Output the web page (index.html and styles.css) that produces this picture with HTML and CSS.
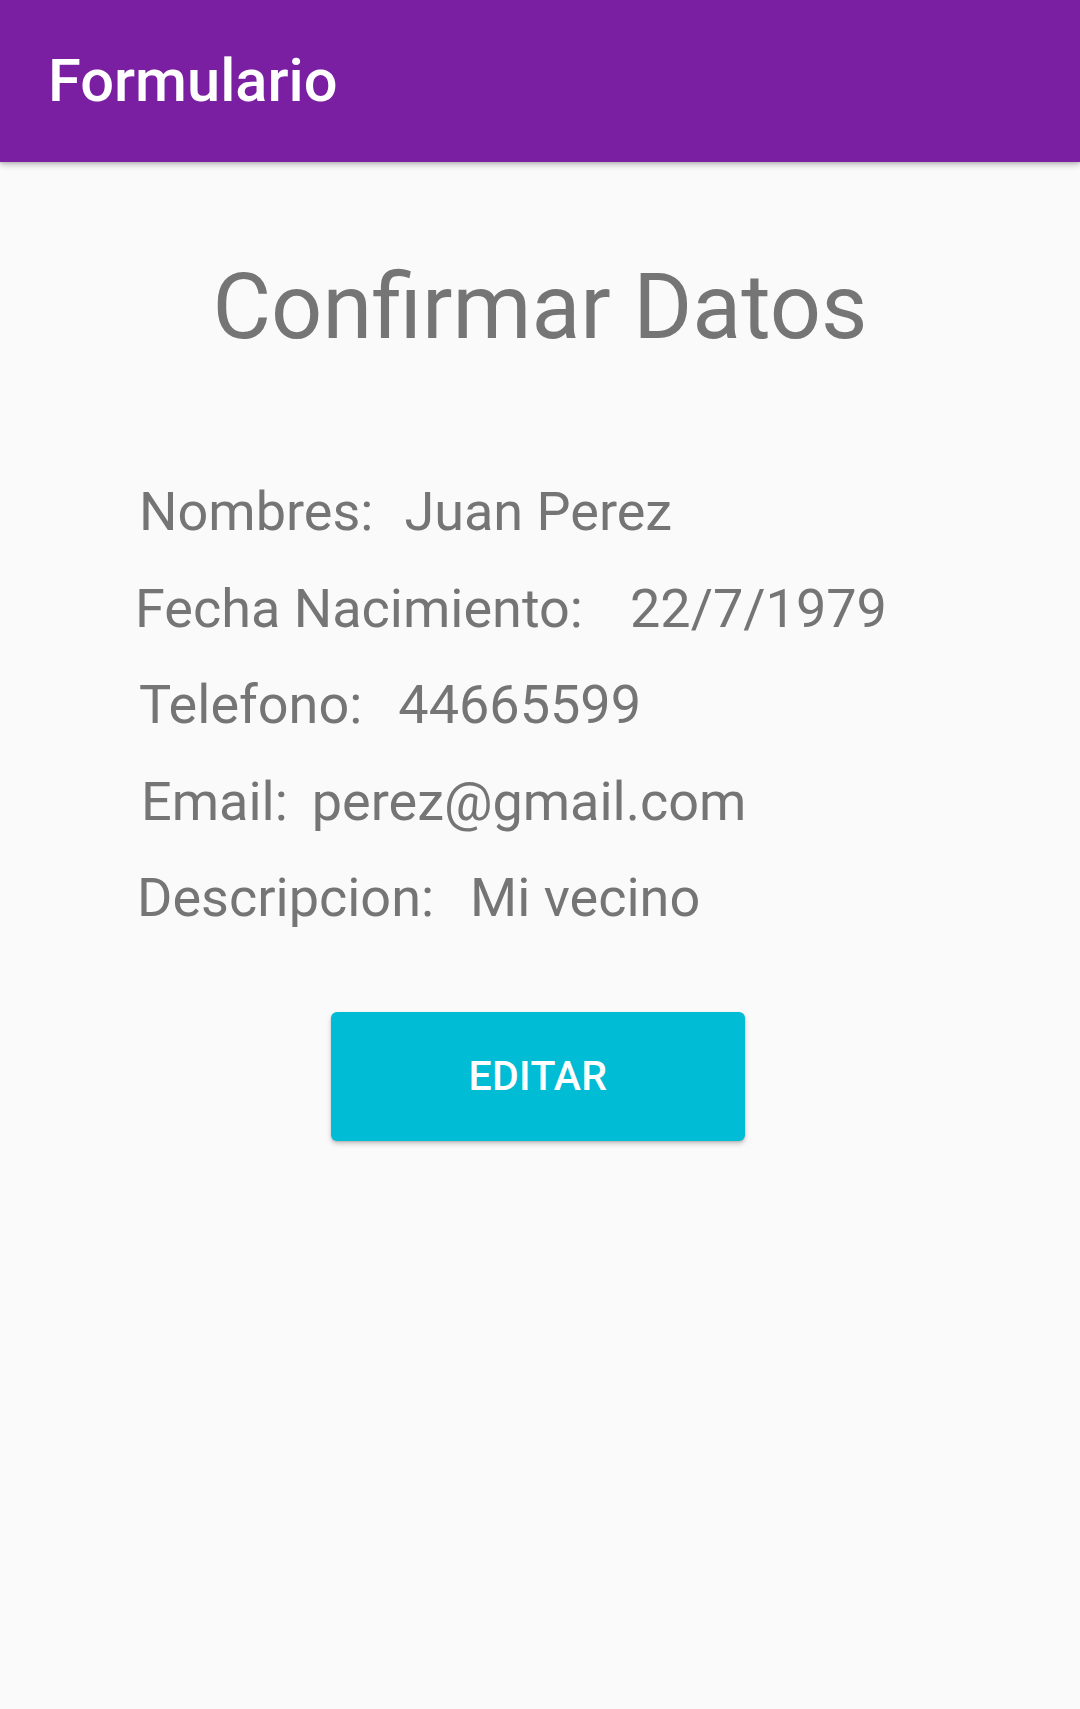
FILE: index.html
```html
<!DOCTYPE html>
<html lang="es">
<head>
<meta charset="utf-8">
<title>Formulario</title>
<link rel="stylesheet" href="styles.css">
</head>
<body>
<header class="appbar">
  <h1 class="appbar-title">Formulario</h1>
</header>
<main class="content">
  <h2 class="heading">Confirmar Datos</h2>
  <div class="rows">
    <div class="row row-nombres"><span class="label">Nombres:</span><span class="value">Juan Perez</span></div>
    <div class="row row-fecha"><span class="label">Fecha Nacimiento:</span><span class="value">22/7/1979</span></div>
    <div class="row row-telefono"><span class="label">Telefono:</span><span class="value">44665599</span></div>
    <div class="row row-email"><span class="label">Email:</span><span class="value">perez@gmail.com</span></div>
    <div class="row row-descripcion"><span class="label">Descripcion:</span><span class="value">Mi vecino</span></div>
  </div>
  <div class="actions">
    <button class="btn" type="button">EDITAR</button>
  </div>
</main>
</body>
</html>
```
FILE: styles.css
```css
* { box-sizing: border-box; }
html, body {
  margin: 0;
  padding: 0;
  background: #fafafa;
  font-family: Roboto, "Noto Sans", sans-serif;
}
body {
  width: 1080px;
  height: 1709px;
  overflow: hidden;
}
.appbar {
  height: 162px;
  background: #7b1fa2;
  box-shadow: 0 3px 6px rgba(0,0,0,0.22), 0 1px 3px rgba(0,0,0,0.12);
  padding-left: 48px;
  position: relative;
  z-index: 1;
}
.appbar-title {
  margin: 0;
  font-size: 59.6px;
  font-weight: 500;
  line-height: 162px;
  color: #ffffff;
}
.content {
  display: flex;
  flex-direction: column;
}
.heading {
  margin: 91px 0 0 0;
  text-align: center;
  font-size: 90px;
  font-weight: 400;
  line-height: 110px;
  color: #757575;
}
.rows {
  margin-top: 101px;
  display: flex;
  flex-direction: column;
  padding-left: 139px;
}
.row {
  display: flex;
  font-size: 54px;
  line-height: 96.5px;
  color: #757575;
  white-space: nowrap;
}
.row-fecha { margin-left: -4px; }
.row-email { margin-left: 2px; }
.row-descripcion { margin-left: -2px; }
.value { margin-left: 36px; }
.row-nombres .value { margin-left: 31px; }
.row-fecha .value { margin-left: 47px; }
.row-email .value { margin-left: 24px; }
.actions {
  margin-top: 65px;
  display: flex;
  justify-content: center;
  padding-right: 4px;
}
.btn {
  width: 414px;
  height: 129px;
  border: 0;
  border-radius: 6px;
  background: #00bcd4;
  color: #ffffff;
  font-family: Roboto, "Noto Sans", sans-serif;
  font-size: 41px;
  font-weight: 500;
  letter-spacing: 0.3px;
  box-shadow: 0 3px 5px rgba(0,0,0,0.2), 0 1px 2px rgba(0,0,0,0.12);
}
```
